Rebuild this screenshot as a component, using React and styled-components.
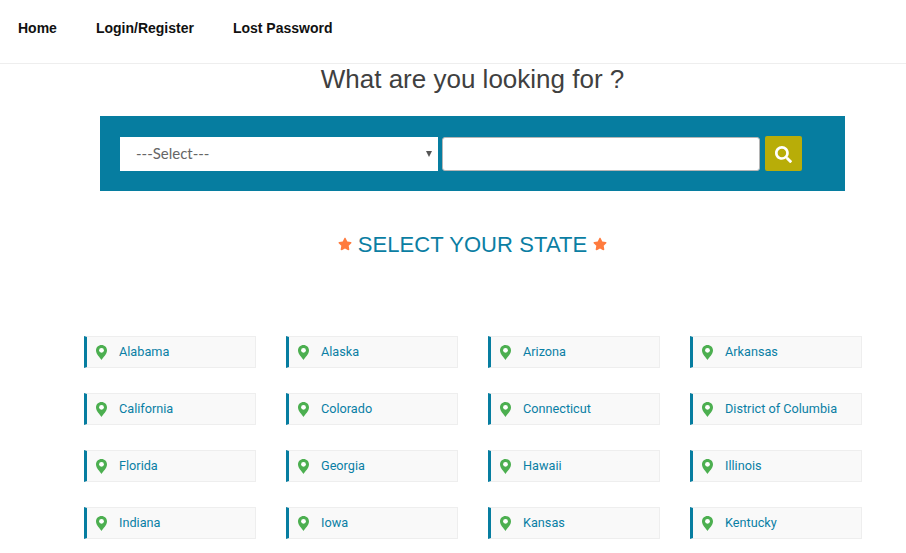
import React from 'react';
import styled, { createGlobalStyle } from 'styled-components';
import { FaSearch, FaStar } from 'react-icons/fa';

const GlobalStyle = createGlobalStyle`
  * { box-sizing: border-box; }
  html, body { margin: 0; padding: 0; background: #fff; }
  body { font-family: "Liberation Sans", Arial, sans-serif; }
`;

const Nav = styled.nav`
  height: 64px;
  display: flex;
  align-items: center;
  gap: 39px;
  padding: 0 0 8px 18px;
  border-bottom: 1px solid #eeeeee;
`;

const NavLink = styled.a`
  font-size: 14px;
  font-weight: 700;
  color: #111;
  text-decoration: none;
`;

const Main = styled.main`
  width: 945px;
`;

const Heading = styled.h1`
  margin: 0;
  height: 52px;
  font-size: 26px;
  line-height: 30px;
  font-weight: 400;
  color: #404040;
  text-align: center;
`;

const SearchPanel = styled.form`
  width: 745px;
  height: 75px;
  margin: 0 auto;
  padding: 20px 0 0 20px;
  display: flex;
  align-items: flex-start;
  background: #067da0;
`;

const SelectWrap = styled.div`
  position: relative;
  width: 318px;
  height: 34px;
  margin-top: 1px;

  &::after {
    content: '';
    position: absolute;
    top: 14px;
    right: 6px;
    border-left: 3px solid transparent;
    border-right: 3px solid transparent;
    border-top: 6px solid #555;
    pointer-events: none;
  }
`;

const StateSelect = styled.select`
  appearance: none;
  width: 100%;
  height: 100%;
  padding: 0 16px 2px;
  border: none;
  border-radius: 0;
  background: #fff;
  color: #666;
  font-family: Lato, sans-serif;
  font-size: 15px;
`;

const SearchInput = styled.input`
  width: 318px;
  height: 34px;
  margin: 1px 0 0 4px;
  border: 1px solid #b5b5b5;
  border-radius: 3px;
  background: #fff;
`;

const SearchButton = styled.button`
  width: 37px;
  height: 35px;
  margin-left: 5px;
  padding: 2px 0 0;
  display: flex;
  align-items: center;
  justify-content: center;
  border: none;
  border-radius: 2px;
  background: #b8ad08;
  color: #fff;
  font-size: 17px;
`;

const StateTitle = styled.h2`
  margin: 40px 0 0;
  height: 105px;
  display: flex;
  justify-content: center;
  align-items: flex-start;
  gap: 6px;
  font-size: 22px;
  line-height: 28px;
  letter-spacing: 0.08px;
  font-weight: 400;
  color: #0b7ea3;
`;

const Star = styled(FaStar)`
  margin-top: 6px;
  font-size: 14px;
  color: #ff7b3e;
`;

const StateGrid = styled.div`
  display: grid;
  grid-template-columns: repeat(4, 172px);
  column-gap: 30px;
  row-gap: 25px;
  padding: 0 0 14px 84px;
`;

const StateCard = styled.a`
  height: 32px;
  display: flex;
  align-items: center;
  padding: 0 0 2px 9px;
  background: #f9f9f9;
  border: 1px solid #eeeeee;
  border-left: 3px solid #067da0;
  font-family: Roboto, sans-serif;
  font-size: 12.7px;
  color: #0a7fa5;
  text-decoration: none;
`;

const PinSvg = styled.svg`
  flex: none;
  width: 11px;
  height: 15px;
  margin: 2px 12px 0 0;
`;

const Pin = () => (
  <PinSvg viewBox="0 0 11 15">
    <path
      fill="#4caf50"
      d="M5.5 0C2.4 0 0 2.4 0 5.4 0 9 4 12.4 5.5 15 7 12.4 11 9 11 5.4 11 2.4 8.6 0 5.5 0Z"
    />
    <circle cx="5.5" cy="5.3" r="2.4" fill="#fff" />
  </PinSvg>
);

const links = ['Home', 'Login/Register', 'Lost Password'];

const states = [
  'Alabama', 'Alaska', 'Arizona', 'Arkansas',
  'California', 'Colorado', 'Connecticut', 'District of Columbia',
  'Florida', 'Georgia', 'Hawaii', 'Illinois',
  'Indiana', 'Iowa', 'Kansas', 'Kentucky',
];

const App = () => (
  <>
    <GlobalStyle />
    <Nav>
      {links.map(link => <NavLink href="#" key={link}>{link}</NavLink>)}
    </Nav>
    <Main>
      <Heading>What are you looking for ?</Heading>
      <SearchPanel onSubmit={e => e.preventDefault()}>
        <SelectWrap>
          <StateSelect defaultValue="">
            <option value="">---Select---</option>
          </StateSelect>
        </SelectWrap>
        <SearchInput type="text" />
        <SearchButton type="submit"><FaSearch /></SearchButton>
      </SearchPanel>
      <StateTitle><Star />SELECT YOUR STATE<Star /></StateTitle>
      <StateGrid>
        {states.map(state => (
          <StateCard href="#" key={state}><Pin />{state}</StateCard>
        ))}
      </StateGrid>
    </Main>
  </>
);

export default App;
